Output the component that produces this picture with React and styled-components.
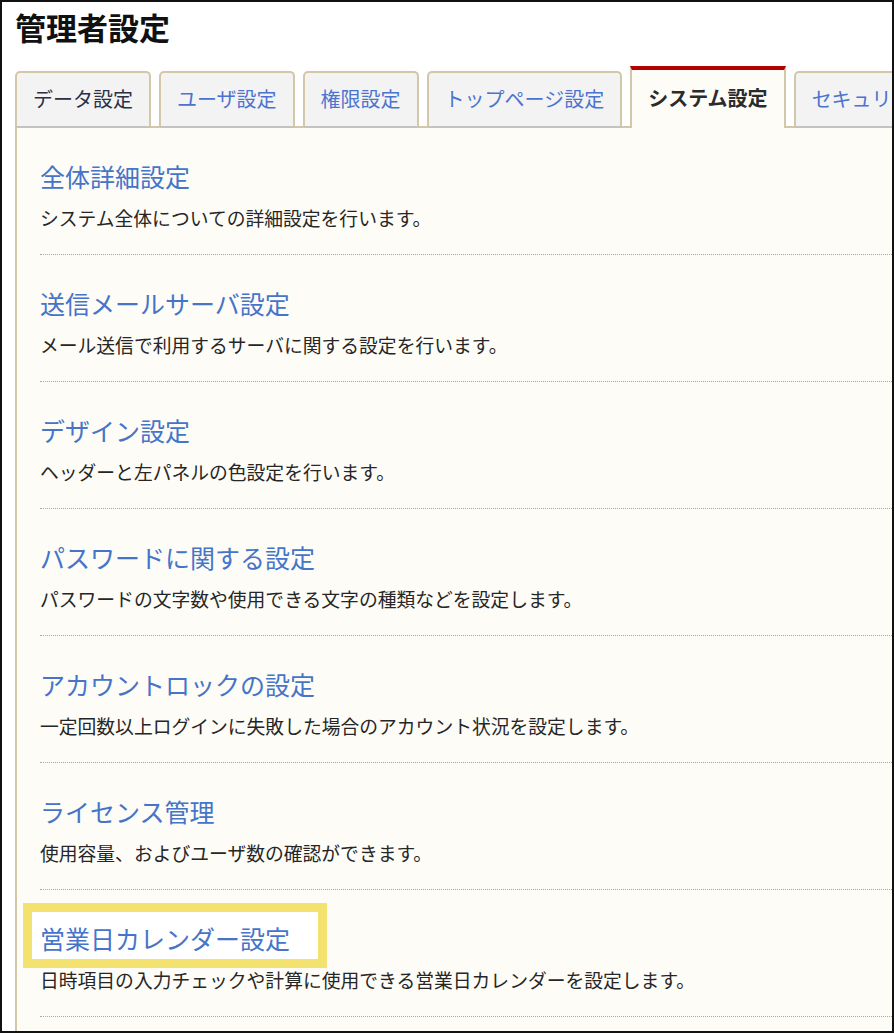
import styled, { createGlobalStyle } from "styled-components";

const GlobalStyle = createGlobalStyle`
  html, body { margin: 0; padding: 0; background: #fff; }
  body { font-family: "Noto Sans CJK JP", "Noto Sans", sans-serif; }
`;

const Frame = styled.div`
  width: 894px;
  height: 1033px;
  box-sizing: border-box;
  border: 2px solid #111;
  overflow: hidden;
  background: #fff;
  padding: 6px 0 0 13px;
`;

const PageTitle = styled.h1`
  margin: 0;
  font-size: 31px;
  line-height: 37px;
  font-weight: 700;
  color: #111;
`;

const TabBar = styled.div`
  display: flex;
  align-items: flex-end;
  gap: 8px;
  margin-top: 21px;
  white-space: nowrap;
  position: relative;
  z-index: 1;
  margin-bottom: -2px;
`;

const Tab = styled.div`
  flex: none;
  box-sizing: border-box;
  padding: 0 16px;
  font-size: 20px;
  border-radius: 5px 5px 0 0;
  border: 2px solid #d2c8a8;
  ${(p) =>
    p.$active
      ? `
    height: 62px;
    line-height: 56px;
    background: #fdfcf7;
    border-top: 4px solid #b40000;
    border-radius: 0;
    border-bottom: none;
    color: #2b2b2b;
    font-weight: 600;
  `
      : `
    height: 57px;
    line-height: 51px;
    background: #f3f3f3;
    border-bottom-color: #c3c3c3;
    color: ${p.$dark ? "#2c2f45" : "#4b73cf"};
  `}
`;

const Panel = styled.div`
  background: #fdfcf7;
  border-top: 2px solid #d2c8a8;
  border-left: 2px solid #d2c8a8;
  min-height: 1000px;
`;

const Item = styled.div`
  margin-left: 23px;
  padding: 30px 0 23px;
  border-bottom: 1px dotted #a8a8a8;
`;

const ItemTitle = styled.a`
  display: inline-block;
  position: relative;
  z-index: 0;
  font-size: 25px;
  line-height: 36px;
  color: #4574c9;
  text-decoration: none;
  cursor: pointer;
  ${(p) =>
    p.$marked &&
    `
    &::before {
      content: "";
      position: absolute;
      left: -17px;
      right: -37px;
      top: -17px;
      bottom: -12px;
      border: 9px solid #f3e26f;
      background: #fff;
      z-index: -1;
    }
  `}
`;

const ItemDesc = styled.p`
  margin: 11px 0 0;
  font-size: 18.8px;
  line-height: 26px;
  color: #262626;
  white-space: nowrap;
`;

const tabs = [
  { label: "データ設定", dark: true },
  { label: "ユーザ設定" },
  { label: "権限設定" },
  { label: "トップページ設定" },
  { label: "システム設定", active: true },
  { label: "セキュリティ設定" },
];

const items = [
  ["全体詳細設定", "システム全体についての詳細設定を行います。"],
  ["送信メールサーバ設定", "メール送信で利用するサーバに関する設定を行います。"],
  ["デザイン設定", "ヘッダーと左パネルの色設定を行います。"],
  ["パスワードに関する設定", "パスワードの文字数や使用できる文字の種類などを設定します。"],
  ["アカウントロックの設定", "一定回数以上ログインに失敗した場合のアカウント状況を設定します。"],
  ["ライセンス管理", "使用容量、およびユーザ数の確認ができます。"],
  ["営業日カレンダー設定", "日時項目の入力チェックや計算に使用できる営業日カレンダーを設定します。", true],
];

export default function App() {
  return (
    <>
      <GlobalStyle />
      <Frame>
        <PageTitle>管理者設定</PageTitle>
        <TabBar>
          {tabs.map((t) => (
            <Tab key={t.label} $active={t.active} $dark={t.dark}>
              {t.label}
            </Tab>
          ))}
        </TabBar>
        <Panel>
          {items.map(([title, desc, marked]) => (
            <Item key={title}>
              <ItemTitle $marked={marked}>{title}</ItemTitle>
              <ItemDesc>{desc}</ItemDesc>
            </Item>
          ))}
        </Panel>
      </Frame>
    </>
  );
}
